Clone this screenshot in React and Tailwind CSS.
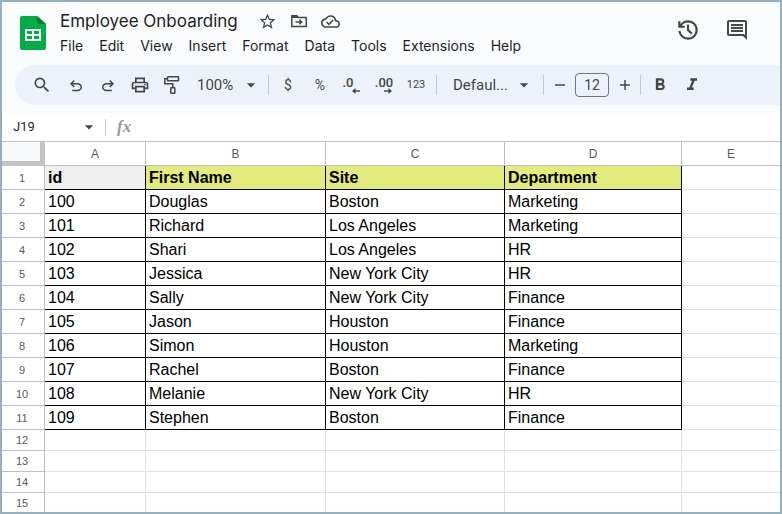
import React from 'react'
import {
  MdArrowDropDown,
  MdFormatBold,
  MdFormatItalic,
  MdOutlineCloudDone,
  MdOutlineComment,
  MdOutlinePrint,
  MdSearch,
  MdStarOutline
} from 'react-icons/md'

const MENUS = ['File', 'Edit', 'View', 'Insert', 'Format', 'Data', 'Tools', 'Extensions', 'Help']

const HEADERS = ['id', 'First Name', 'Site', 'Department']

const EMPLOYEES = [
  [100, 'Douglas', 'Boston', 'Marketing'],
  [101, 'Richard', 'Los Angeles', 'Marketing'],
  [102, 'Shari', 'Los Angeles', 'HR'],
  [103, 'Jessica', 'New York City', 'HR'],
  [104, 'Sally', 'New York City', 'Finance'],
  [105, 'Jason', 'Houston', 'Finance'],
  [106, 'Simon', 'Houston', 'Marketing'],
  [107, 'Rachel', 'Boston', 'Finance'],
  [108, 'Melanie', 'New York City', 'HR'],
  [109, 'Stephen', 'Boston', 'Finance']
]

const EMPTY_ROWS = [12, 13, 14, 15]

function SheetsLogo () {
  return (
    <svg viewBox="0 0 26 34" className="h-[34px] w-[26px] shrink-0" aria-hidden="true">
      <path d="M2 0H17l9 8v24a2 2 0 0 1-2 2H2a2 2 0 0 1-2-2V2a2 2 0 0 1 2-2Z" fill="#00ac47" />
      <path d="M17 0l9 8H17Z" fill="#00832d" />
      <path fillRule="evenodd" d="M5 13h16v12H5ZM7 15v3h5v-3ZM14 15v3h5v-3ZM7 20v3h5v-3ZM14 20v3h5v-3Z" fill="#fff" />
    </svg>
  )
}

function SymbolIcon ({ d, className }) {
  return (
    <svg viewBox="0 -960 960 960" fill="currentColor" className={className} aria-hidden="true">
      <path d={d} />
    </svg>
  )
}

const UNDO = 'M280-200v-80h284q63 0 109.500-40T720-420q0-60-46.500-100T564-560H312l104 104-56 56-200-200 200-200 56 56-104 104h252q97 0 166.500 63T800-420q0 94-69.500 157T564-200H280Z'
const REDO = 'M396-200q-97 0-166.500-63T160-420q0-94 69.500-157T396-640h252L544-744l56-56 200 200-200 200-56-56 104-104H396q-63 0-109.500 40T240-420q0 60 46.500 100T396-280h284v80H396Z'
const HISTORY = 'M480-120q-138 0-240.500-91.500T122-440h82q14 104 92.500 172T480-200q117 0 198.500-81.500T760-480q0-117-81.500-198.500T480-760q-69 0-129 32t-101 88h110v80H120v-240h80v94q51-64 124.500-99T480-840q75 0 140.500 28.500t114 77q48.500 48.500 77 114T840-480q0 75-28.500 140.500t-77 114q-48.500 48.500-114 77T480-120Zm112-192L440-464v-216h80v184l128 128-56 56Z'

function MoveToFolder () {
  return (
    <svg viewBox="0 0 18 14" className="h-[14px] w-[18px]" aria-hidden="true">
      <path d="M1.800 1.800h5l1.500 1.700h8v9H1.800Z" fill="none" stroke="currentColor" strokeWidth="1.500" strokeLinejoin="round" />
      <path d="M1.500 1.500h5.500l2 2.500H1.500Z" fill="currentColor" />
      <path d="M5.500 8h6M9.300 5.700L11.700 8l-2.400 2.300" fill="none" stroke="currentColor" strokeWidth="1.500" />
    </svg>
  )
}

function PaintRoller () {
  return (
    <svg viewBox="0 0 18 18" className="size-[18px]" fill="none" stroke="currentColor" strokeWidth="1.500" aria-hidden="true">
      <rect x="4.500" y="0.800" width="11" height="4" rx="0.500" />
      <path d="M4.500 2.800H1.800v5h8v4" />
      <rect x="7.800" y="11.800" width="4" height="5.400" rx="0.500" />
    </svg>
  )
}

function Arrow ({ d }) {
  return (
    <svg viewBox="0 0 8 6" className="absolute right-2 bottom-[7px] h-[6px] w-2" fill="currentColor" aria-hidden="true">
      <path d={d} />
    </svg>
  )
}

function ToolButton ({ label, children }) {
  return (
    <button type="button" aria-label={label} className="relative flex h-8 w-8 shrink-0 items-center justify-center">
      {children}
    </button>
  )
}

function Divider () {
  return <span className="h-5 w-px shrink-0 bg-[#c7c7c7]" />
}

function Dropdown ({ label, value, className }) {
  return (
    <label className={className}>
      <select aria-label={label} className="col-start-1 row-start-1 h-8 w-full appearance-none bg-transparent outline-none" defaultValue={value}>
        <option>{value}</option>
      </select>
      <MdArrowDropDown className="pointer-events-none col-start-1 row-start-1 size-5 justify-self-end" />
    </label>
  )
}

function TitleBar () {
  return (
    <header className="flex h-[63px] shrink-0 items-start pr-[31px] pl-[18px]">
      <div className="pt-[14px]">
        <SheetsLogo />
      </div>
      <div className="ml-[14px] pt-[6px] font-[Inter,sans-serif]">
        <div className="flex h-[26px] items-center text-[#444746]">
          <h1 className="text-[17px] leading-6 text-[#1f1f1f]">Employee Onboarding</h1>
          <button type="button" aria-label="Star" className="ml-5"><MdStarOutline className="size-[19px]" /></button>
          <button type="button" aria-label="Move" className="ml-[13px]"><MoveToFolder /></button>
          <button type="button" aria-label="Document status" className="ml-[13px]"><MdOutlineCloudDone className="size-[19px]" /></button>
        </div>
        <nav className="flex gap-4 text-[14px] leading-6 text-[#1f1f1f]">
          {MENUS.map((menu) => (
            <button key={menu} type="button">{menu}</button>
          ))}
        </nav>
      </div>
      <div className="ml-auto flex items-center gap-6 pt-[15px] text-[#444746]">
        <button type="button" aria-label="Version history"><SymbolIcon d={HISTORY} className="size-[26px]" /></button>
        <button type="button" aria-label="Comments"><MdOutlineComment className="size-6" /></button>
      </div>
    </header>
  )
}

function Toolbar () {
  return (
    <div role="toolbar" aria-label="Formatting" className="ml-[13px] flex h-10 shrink-0 items-center overflow-hidden rounded-l-full bg-[#edf2fa] pl-[11px] text-[15px] text-[#444746]">
      <ToolButton label="Search"><MdSearch className="size-5" /></ToolButton>
      <div className="ml-[2px] flex">
        <ToolButton label="Undo"><SymbolIcon d={UNDO} className="mt-0.5 size-[18px]" /></ToolButton>
        <ToolButton label="Redo"><SymbolIcon d={REDO} className="mt-0.5 size-[18px]" /></ToolButton>
        <ToolButton label="Print"><MdOutlinePrint className="size-5" /></ToolButton>
        <ToolButton label="Paint format"><PaintRoller /></ToolButton>
      </div>
      <Dropdown label="Zoom" value="100%" className="mr-[7px] ml-[9px] grid w-16 shrink-0 items-center" />
      <Divider />
      <div className="mr-1 ml-[3px] flex">
        <ToolButton label="Format as currency"><span className="text-[14px]">$</span></ToolButton>
        <ToolButton label="Format as percent"><span className="text-[14px]">%</span></ToolButton>
        <ToolButton label="Decrease decimal places">
          <span className="pr-2 pb-1 text-[13px] font-medium">.0</span>
          <Arrow d="M0 3L3.500 0V2.200H8V3.800H3.500V6Z" />
        </ToolButton>
        <ToolButton label="Increase decimal places">
          <span className="pb-1 text-[13px] font-medium">.00</span>
          <Arrow d="M8 3L4.500 0V2.200H0V3.800H4.500V6Z" />
        </ToolButton>
        <ToolButton label="More formats"><span className="text-[11px]">123</span></ToolButton>
      </div>
      <Divider />
      <Dropdown label="Font" value="Defaul..." className="mr-[9px] ml-4 grid w-[81px] shrink-0 items-center" />
      <Divider />
      <button type="button" aria-label="Decrease font size" className="flex h-8 w-[31px] shrink-0 items-center justify-center">
        <svg viewBox="0 0 12 12" className="size-3" stroke="currentColor" strokeWidth="1.500" aria-hidden="true"><path d="M1 6h10" /></svg>
      </button>
      <input aria-label="Font size" defaultValue="12" className="h-6 w-[34px] shrink-0 rounded border border-[#747775] bg-transparent text-center text-[14px] outline-none" />
      <button type="button" aria-label="Increase font size" className="flex h-8 w-[31px] shrink-0 items-center justify-center">
        <svg viewBox="0 0 12 12" className="size-3" stroke="currentColor" strokeWidth="1.500" aria-hidden="true"><path d="M1 6h10M6 1v10" /></svg>
      </button>
      <Divider />
      <div className="ml-[3px] flex">
        <ToolButton label="Bold"><MdFormatBold className="size-5" /></ToolButton>
        <ToolButton label="Italic"><MdFormatItalic className="size-5" /></ToolButton>
      </div>
    </div>
  )
}

function FormulaBar () {
  return (
    <div className="mt-2 flex h-7 shrink-0 items-center bg-white pl-[11px] text-[#444746]">
      <input aria-label="Name box" defaultValue="J19" className="w-[66px] bg-transparent text-[13px] text-[#1f1f1f] outline-none" />
      <button type="button" aria-label="Named ranges"><MdArrowDropDown className="size-5" /></button>
      <span className="ml-[6px] h-4 w-px bg-[#c7c7c7]" />
      <label htmlFor="formula" className="ml-[11px] font-['Liberation_Serif',serif] text-[17px] leading-5 font-bold text-[#9a9a9a] italic">fx</label>
      <input id="formula" className="ml-2 min-w-0 flex-1 bg-transparent outline-none" />
    </div>
  )
}

function RowHeader ({ children }) {
  return (
    <th scope="row" className="border-r border-b border-[#c0c0c0] p-0 pr-0.5 text-center text-[11px] leading-4 font-normal text-[#575a5a]">
      {children}
    </th>
  )
}

function Grid () {
  return (
    <div className="min-h-0 flex-1 overflow-hidden border-t border-[#c0c0c0] bg-white font-['Liberation_Sans',Arial,sans-serif]">
      <table className="w-full table-fixed border-separate border-spacing-0 text-[16px] leading-5 text-black">
        <colgroup>
          <col className="w-[43px]" />
          <col className="w-[101px]" />
          <col className="w-[180px]" />
          <col className="w-[179px]" />
          <col className="w-[177px]" />
          <col />
        </colgroup>
        <thead>
          <tr className="h-6 text-[12px] leading-4 text-[#575a5a]">
            <td className="border-r-5 border-b-5 border-[#c4c4c4] bg-[#f8f9fa] p-0" />
            {['A', 'B', 'C', 'D'].map((col) => (
              <th key={col} scope="col" className="border-r border-b border-[#c0c0c0] p-0 font-normal">{col}</th>
            ))}
            <th scope="col" className="border-b border-[#c0c0c0] p-0 font-normal">E</th>
          </tr>
        </thead>
        <tbody>
          <tr className="h-6">
            <RowHeader>1</RowHeader>
            {HEADERS.map((header) => (
              <td key={header} className={`border-r border-b border-black p-0 pl-[3px] font-bold ${header === 'id' ? 'bg-[#efefef]' : 'bg-[#e2eb7b]'}`}>
                {header}
              </td>
            ))}
            <td className="border-b border-[#e1e1e1] p-0" />
          </tr>
          {EMPLOYEES.map((employee, i) => (
            <tr key={employee[0]} className="h-6">
              <RowHeader>{i + 2}</RowHeader>
              {employee.map((value, col) => (
                <td key={HEADERS[col]} className="border-r border-b border-black p-0 pl-[3px]">{value}</td>
              ))}
              <td className="border-b border-[#e1e1e1] p-0" />
            </tr>
          ))}
          {EMPTY_ROWS.map((row) => (
            <tr key={row} className="h-[21px]">
              <RowHeader>{row}</RowHeader>
              {HEADERS.map((header) => (
                <td key={header} className="border-r border-b border-[#e1e1e1] p-0" />
              ))}
              <td className="border-b border-[#e1e1e1] p-0" />
            </tr>
          ))}
        </tbody>
      </table>
    </div>
  )
}

function App () {
  return (
    <div className="flex h-screen flex-col overflow-hidden border-2 border-[#93b1bf] bg-[#f9fbfd] font-[Roboto,sans-serif]">
      <TitleBar />
      <Toolbar />
      <FormulaBar />
      <Grid />
    </div>
  )
}

export default App
